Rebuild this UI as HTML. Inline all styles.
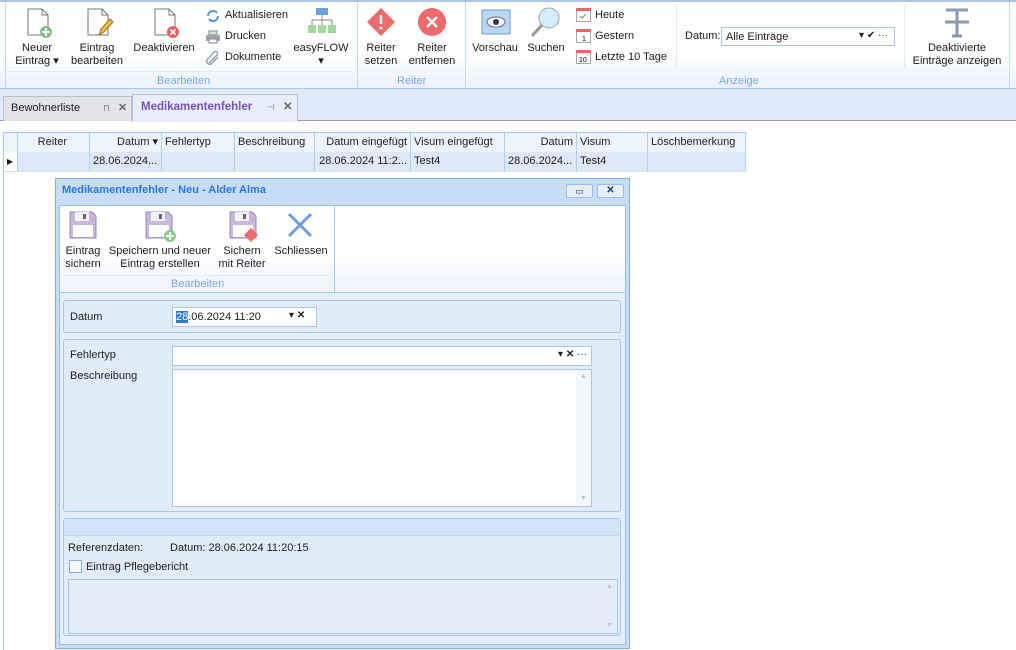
<!DOCTYPE html>
<html><head><meta charset="utf-8"><style>
*{box-sizing:border-box;margin:0;padding:0}
body{width:1016px;height:650px;position:relative;overflow:hidden;background:#fff;font-family:"Liberation Sans",sans-serif;font-size:11px;color:#1e1e1e}
.a{position:absolute}
.c{text-align:center;line-height:13px}
.gl{color:#7aa8e8;font-size:11px}
.hd{position:absolute;top:133px;height:19px;border-right:1px solid #b4cdef;line-height:18px;padding:0 3px;background:#eef4fd}
.rw{position:absolute;top:152px;height:20px;border-right:1px solid #b4cdef;line-height:19px;padding:0 3px;background:#dde8f8}
.box{position:absolute;border:1px solid #a9c6ee;border-radius:3px;background:#e1ecfb}
.inp{position:absolute;background:#fff;border:1px solid #a9c6ee}
</style></head><body>
<!-- ribbon -->
<div class="a" style="left:0;top:0;width:1016px;height:89px;background:linear-gradient(#fff,#fff 60%,#eaf2fd);border-top:2px solid #a9c6ee;border-bottom:1px solid #a9c6ee"></div>
<div class="a" style="left:5px;top:2px;width:1px;height:86px;background:#c6daf5"></div>
<div class="a" style="left:357px;top:2px;width:1px;height:86px;background:#c6daf5"></div>
<div class="a" style="left:465px;top:2px;width:1px;height:86px;background:#c6daf5"></div>
<div class="a" style="left:1009px;top:2px;width:1px;height:86px;background:#c6daf5"></div>
<div class="a" style="left:676px;top:6px;width:1px;height:62px;background:#e1ebf8"></div>
<div class="a" style="left:904px;top:6px;width:1px;height:62px;background:#e1ebf8"></div>
<div class="a" style="left:8px;top:71px;width:345px;height:1px;background:#e3edf9"></div>
<!-- icons row -->
<svg class="a" style="left:25px;top:7px" width="30" height="32"><path d="M3 2h14l6 6v20H3z" fill="#fff" stroke="#777"/><path d="M17 2v6h6" fill="none" stroke="#777"/><circle cx="21" cy="25" r="6" fill="#7ec27e"/><path d="M21 21v8M17 25h8" stroke="#fff" stroke-width="2"/></svg>
<svg class="a" style="left:85px;top:7px" width="30" height="32"><path d="M3 2h14l6 6v20H3z" fill="#fff" stroke="#777"/><path d="M17 2v6h6" fill="none" stroke="#777"/><path d="M14 28l2-6 9-10 3 3-9 10z" fill="#f0c040" stroke="#a07020"/></svg>
<svg class="a" style="left:152px;top:7px" width="30" height="32"><path d="M3 2h14l6 6v20H3z" fill="#fff" stroke="#777"/><path d="M17 2v6h6" fill="none" stroke="#777"/><circle cx="21" cy="25" r="6" fill="#e86060"/><path d="M18.5 22.5l5 5M23.5 22.5l-5 5" stroke="#fff" stroke-width="1.6"/></svg>
<div class="a c" style="left:10px;top:42px;width:54px">Neuer<br>Eintrag ▾</div>
<div class="a c" style="left:66px;top:42px;width:62px">Eintrag<br>bearbeiten</div>
<div class="a c" style="left:130px;top:42px;width:68px">Deaktivieren</div>
<svg class="a" style="left:205px;top:8px" width="16" height="16"><path d="M3 8a5 5 0 0 1 9-3M13 8a5 5 0 0 1-9 3" fill="none" stroke="#5b93d8" stroke-width="2"/></svg>
<svg class="a" style="left:205px;top:29px" width="16" height="16"><rect x="4" y="2" width="8" height="4" fill="#ddd" stroke="#888"/><rect x="1" y="6" width="14" height="6" fill="#9aa6b2"/><rect x="4" y="10" width="8" height="4" fill="#fff" stroke="#888"/></svg>
<svg class="a" style="left:205px;top:50px" width="16" height="16"><path d="M4 13l8-8a2 2 0 0 0-3-3L2 10a3 3 0 0 0 4 4l7-7" fill="none" stroke="#8a9bb0" stroke-width="1.3"/></svg>
<div class="a" style="left:225px;top:9px">Aktualisieren</div>
<div class="a" style="left:225px;top:30px">Drucken</div>
<div class="a" style="left:225px;top:51px">Dokumente</div>
<svg class="a" style="left:306px;top:7px" width="32" height="30"><rect x="10" y="1" width="12" height="7" fill="#6ea0e0"/><path d="M16 8v5M6 13h20M6 13v5M16 13v5M26 13v5" stroke="#888"/><rect x="2" y="18" width="8" height="8" fill="#a6d6a0"/><rect x="12" y="18" width="8" height="8" fill="#a6d6a0"/><rect x="22" y="18" width="8" height="8" fill="#a6d6a0"/></svg>
<div class="a c" style="left:290px;top:42px;width:62px">easyFLOW<br>▾</div>
<svg class="a" style="left:366px;top:7px" width="30" height="30"><path d="M15 1l14 14-14 14L1 15z" fill="#ef6b6b"/><path d="M15 8v9" stroke="#fff" stroke-width="2.5"/><circle cx="15" cy="21" r="1.5" fill="#fff"/></svg>
<svg class="a" style="left:417px;top:7px" width="30" height="30"><circle cx="15" cy="15" r="14" fill="#ef6b6b"/><path d="M10 10l10 10M20 10l-10 10" stroke="#fff" stroke-width="2.5"/></svg>
<div class="a c" style="left:360px;top:42px;width:42px">Reiter<br>setzen</div>
<div class="a c" style="left:403px;top:42px;width:58px">Reiter<br>entfernen</div>
<svg class="a" style="left:481px;top:9px" width="30" height="26"><rect x="1" y="1" width="28" height="24" fill="#b9d7f5" stroke="#6e9cd8"/><ellipse cx="15" cy="13" rx="9" ry="5" fill="#fff" stroke="#668"/><circle cx="15" cy="13" r="3" fill="#335"/></svg>
<svg class="a" style="left:529px;top:6px" width="34" height="32"><circle cx="20" cy="12" r="10" fill="#d6ecfb" stroke="#8ab"/><path d="M13 19L3 30" stroke="#999" stroke-width="3"/></svg>
<div class="a c" style="left:470px;top:42px;width:50px">Vorschau</div>
<div class="a c" style="left:525px;top:42px;width:42px">Suchen</div>
<svg class="a" style="left:576px;top:8px" width="15" height="14"><rect x=".5" y=".5" width="14" height="13" fill="#fff" stroke="#aaa"/><rect x="0" y="0" width="15" height="3" fill="#e66"/><path d="M4 8l2 2 4-4" stroke="#4a4" fill="none"/></svg>
<svg class="a" style="left:576px;top:29px" width="15" height="14"><rect x=".5" y=".5" width="14" height="13" fill="#fff" stroke="#aaa"/><rect x="0" y="0" width="15" height="3" fill="#e66"/><text x="6" y="12" font-size="7" font-family="Liberation Sans">1</text></svg>
<svg class="a" style="left:576px;top:50px" width="15" height="14"><rect x=".5" y=".5" width="14" height="13" fill="#fff" stroke="#aaa"/><rect x="0" y="0" width="15" height="3" fill="#e66"/><text x="3" y="12" font-size="7" font-family="Liberation Sans">10</text></svg>
<div class="a" style="left:595px;top:9px">Heute</div>
<div class="a" style="left:595px;top:30px">Gestern</div>
<div class="a" style="left:595px;top:51px">Letzte 10 Tage</div>
<div class="a" style="left:685px;top:30px">Datum:</div>
<div class="inp" style="left:721px;top:27px;width:174px;height:19px;padding:3px 4px">Alle Einträge<span style="position:absolute;right:6px;top:2px;font-size:10px">▾ ✔ ···</span></div>
<svg class="a" style="left:944px;top:8px" width="26" height="30"><path d="M2 2h22M13 2v26M8 28h10M1 14h24" stroke="#8a9ab0" stroke-width="3" fill="none"/></svg>
<div class="a c" style="left:905px;top:42px;width:104px">Deaktivierte<br>Einträge anzeigen</div>
<div class="a gl" style="left:157px;top:75px">Bearbeiten</div>
<div class="a gl" style="left:397px;top:75px">Reiter</div>
<div class="a gl" style="left:719px;top:75px">Anzeige</div>
<!-- tab bar -->
<div class="a" style="left:0;top:89px;width:1016px;height:32px;background:#dfeafa;border-bottom:1px solid #9c9c9c"></div>
<div class="a" style="left:3px;top:96px;width:129px;height:25px;background:#e3e3ea;border:1px solid #b9c2d3;border-bottom:none;line-height:22px;padding-left:7px">Bewohnerliste<span style="position:absolute;left:99px;color:#777;font-size:9px">⊓</span><span style="position:absolute;left:114px;color:#666;font-weight:bold">✕</span></div>
<div class="a" style="left:132px;top:94px;width:166px;height:28px;background:#e8effa;border:1px solid #b9c2d3;border-bottom:none;line-height:24px;padding-left:8px;color:#7a4fc0;font-weight:bold;font-size:11.5px">Medikamentenfehler<span style="position:absolute;left:134px;color:#777;font-weight:normal;font-size:9px">⊣</span><span style="position:absolute;left:150px;color:#666">✕</span></div>
<!-- grid -->
<div class="a" style="left:3px;top:132px;width:743px;height:1px;background:#a9c6ee"></div>
<div class="a" style="left:3px;top:133px;width:1px;height:517px;background:#a9c6ee"></div>
<div class="hd" style="left:4px;width:14px"></div>
<div class="hd" style="left:18px;width:72px;text-align:right;padding-right:22px">Reiter</div>
<div class="hd" style="left:90px;width:72px;text-align:right">Datum ▾</div>
<div class="hd" style="left:162px;width:73px">Fehlertyp</div>
<div class="hd" style="left:235px;width:80px">Beschreibung</div>
<div class="hd" style="left:315px;width:96px;text-align:right">Datum eingefügt</div>
<div class="hd" style="left:411px;width:94px">Visum eingefügt</div>
<div class="hd" style="left:505px;width:72px;text-align:right">Datum</div>
<div class="hd" style="left:577px;width:71px">Visum</div>
<div class="hd" style="left:648px;width:98px">Löschbemerkung</div>
<div class="rw" style="left:4px;width:14px;background:#fff;font-size:8px">▶</div>
<div class="rw" style="left:18px;width:72px"></div>
<div class="rw" style="left:90px;width:72px">28.06.2024...</div>
<div class="rw" style="left:162px;width:73px"></div>
<div class="rw" style="left:235px;width:80px"></div>
<div class="rw" style="left:315px;width:96px;text-align:right">28.06.2024 11:2...</div>
<div class="rw" style="left:411px;width:94px">Test4</div>
<div class="rw" style="left:505px;width:72px">28.06.2024...</div>
<div class="rw" style="left:577px;width:71px">Test4</div>
<div class="rw" style="left:648px;width:98px"></div>
<div class="a" style="left:4px;top:171px;width:742px;height:1px;background:#d0e0f5"></div>
<!-- dialog -->
<div class="a" style="left:55px;top:178px;width:575px;height:471px;background:#c9dcf6;border:1px solid #86aee6"></div>
<div class="a" style="left:62px;top:184px;font-weight:bold;color:#2a78d8">Medikamentenfehler - Neu - Alder Alma</div>
<div class="a" style="left:566px;top:184px;width:27px;height:14px;border:1px solid #9bbbe8;border-radius:2px;background:#e6effb;text-align:center;font-size:9px;line-height:12px;color:#1e3c78">▭</div>
<div class="a" style="left:597px;top:184px;width:27px;height:14px;border:1px solid #9bbbe8;border-radius:2px;background:#e6effb;text-align:center;font-size:10px;line-height:12px;font-weight:bold;color:#1e3c78">✕</div>
<div class="a" style="left:59px;top:205px;width:567px;height:440px;background:#e4eefc;border:1px solid #9bbbe8"></div>
<div class="a" style="left:60px;top:206px;width:565px;height:87px;background:linear-gradient(#fff,#fff 60%,#edf3fd);border-bottom:1px solid #a9c6ee"></div>
<div class="a" style="left:334px;top:206px;width:1px;height:87px;background:#a9c6ee"></div>
<div class="a" style="left:62px;top:275px;width:268px;height:1px;background:#e3edf9"></div>
<svg class="a" style="left:69px;top:211px" width="28" height="28"><path d="M1 1h22l4 4v22H1z" fill="#c8b8e0" stroke="#9a88be"/><rect x="6" y="1" width="14" height="9" fill="#f4f4f8"/><rect x="14" y="3" width="3" height="5" fill="#666"/><rect x="4" y="14" width="20" height="12" fill="#fff"/></svg>
<svg class="a" style="left:145px;top:211px" width="32" height="32"><path d="M1 1h22l4 4v22H1z" fill="#c8b8e0" stroke="#9a88be"/><rect x="6" y="1" width="14" height="9" fill="#f4f4f8"/><rect x="14" y="3" width="3" height="5" fill="#666"/><rect x="4" y="14" width="20" height="12" fill="#fff"/><circle cx="25" cy="25" r="6" fill="#8ccb8c"/><path d="M25 21v8M21 25h8" stroke="#fff" stroke-width="2"/></svg>
<svg class="a" style="left:229px;top:211px" width="32" height="32"><path d="M1 1h22l4 4v22H1z" fill="#c8b8e0" stroke="#9a88be"/><rect x="6" y="1" width="14" height="9" fill="#f4f4f8"/><rect x="14" y="3" width="3" height="5" fill="#666"/><rect x="4" y="14" width="20" height="12" fill="#fff"/><path d="M22 17l7 7-7 7-7-7z" fill="#ef6b6b"/></svg>
<svg class="a" style="left:287px;top:212px" width="26" height="26"><path d="M2 2l22 22M24 2L2 24" stroke="#6a9ede" stroke-width="3"/></svg>
<div class="a c" style="left:62px;top:245px;width:42px">Eintrag<br>sichern</div>
<div class="a c" style="left:108px;top:245px;width:104px">Speichern und neuer<br>Eintrag erstellen</div>
<div class="a c" style="left:214px;top:245px;width:56px">Sichern<br>mit Reiter</div>
<div class="a c" style="left:272px;top:245px;width:58px">Schliessen</div>
<div class="a gl" style="left:171px;top:278px">Bearbeiten</div>
<!-- Datum box -->
<div class="box" style="left:63px;top:300px;width:558px;height:33px"></div>
<div class="a" style="left:70px;top:311px">Datum</div>
<div class="inp" style="left:172px;top:307px;width:145px;height:20px;padding:3px 3px"><span style="background:#3078d8;color:#fff">28</span>.06.2024 11:20<span style="position:absolute;left:116px;top:2px;font-size:10px">▾ <b>✕</b></span></div>
<!-- second box -->
<div class="box" style="left:63px;top:339px;width:558px;height:173px"></div>
<div class="a" style="left:70px;top:349px">Fehlertyp</div>
<div class="inp" style="left:172px;top:346px;width:420px;height:20px"><span style="position:absolute;right:4px;top:2px;font-size:10px">▾ <b>✕</b> ···</span></div>
<div class="a" style="left:70px;top:370px">Beschreibung</div>
<div class="inp" style="left:172px;top:369px;width:420px;height:138px"><div style="position:absolute;right:0;top:0;width:15px;height:136px;background:#f3f6fb;color:#b4c4dc;font-size:7px;text-align:center;line-height:14px">▲<div style="position:absolute;bottom:0;width:15px">▼</div></div></div>
<!-- third box -->
<div class="box" style="left:63px;top:518px;width:558px;height:118px"></div>
<div class="a" style="left:64px;top:519px;width:556px;height:17px;background:#d3e3fa;border-bottom:1px solid #c3d7f3"></div>
<div class="a" style="left:68px;top:542px">Referenzdaten:</div>
<div class="a" style="left:170px;top:542px">Datum: 28.06.2024 11:20:15</div>
<div class="a" style="left:69px;top:560px;width:13px;height:13px;border:1px solid #8aaee0;background:#f4f8fe"></div>
<div class="a" style="left:86px;top:561px">Eintrag Pflegebericht</div>
<div class="a" style="left:68px;top:579px;width:550px;height:55px;border:1px solid #a9c6ee;background:#e2ecfb"><div style="position:absolute;right:0;top:0;width:15px;height:53px;color:#b4c4dc;font-size:7px;text-align:center;line-height:14px">▲<div style="position:absolute;bottom:0;width:15px">▼</div></div></div>
</body></html>
